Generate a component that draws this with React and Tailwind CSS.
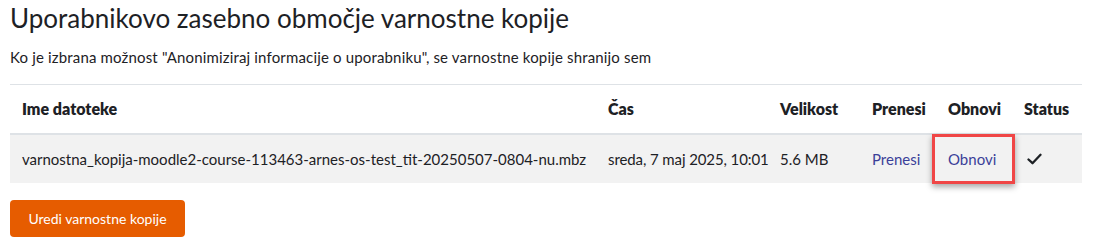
export default function App() {
  return (
    <div className="px-[10px] pt-[3px] font-['Lato','Liberation_Sans',sans-serif] text-[#1d2125] bg-white min-h-screen">
      <h2 className="text-[26px] leading-[31px] font-normal">Uporabnikovo zasebno območje varnostne kopije</h2>
      <p className="mt-[12px] text-[15px] leading-[22px] tracking-[0.16px]">
        Ko je izbrana možnost "Anonimiziraj informacije o uporabniku", se varnostne kopije shranijo sem
      </p>
      <table className="mt-[16px] w-[1072px] table-fixed border-collapse text-[15px] leading-[22px]">
        <thead>
          <tr className="border-t border-[#dee2e6] text-[16px]">
            <th className="w-[586px] px-[12px] py-[13px] text-left font-extrabold border-b-2 border-[#dee2e6]">Ime datoteke</th>
            <th className="w-[172px] px-[12px] py-[13px] text-left font-extrabold border-b-2 border-[#dee2e6]">Čas</th>
            <th className="w-[92px] px-[12px] py-[13px] text-left font-extrabold border-b-2 border-[#dee2e6]">Velikost</th>
            <th className="w-[76px] px-[12px] py-[13px] text-left font-extrabold border-b-2 border-[#dee2e6]">Prenesi</th>
            <th className="w-[76px] px-[12px] py-[13px] text-left font-extrabold border-b-2 border-[#dee2e6]">Obnovi</th>
            <th className="w-[70px] px-[12px] py-[13px] text-left font-extrabold border-b-2 border-[#dee2e6]">Status</th>
          </tr>
        </thead>
        <tbody>
          <tr className="bg-[#f2f2f2]">
            <td className="px-[12px] py-[13px] whitespace-nowrap">varnostna_kopija-moodle2-course-113463-arnes-os-test_tit-20250507-0804-nu.mbz</td>
            <td className="px-[12px] py-[13px] whitespace-nowrap tracking-[-0.1px]">sreda, 7 maj 2025, 10:01</td>
            <td className="px-[12px] py-[13px] whitespace-nowrap">5.6 MB</td>
            <td className="px-[12px] py-[13px]">
              <a className="text-[#3b3f99]">Prenesi</a>
            </td>
            <td className="relative px-[12px] py-[13px]">
              <a className="text-[#3b3f99]">Obnovi</a>
              <span className="absolute left-[-4px] right-[-3px] top-[-1px] bottom-[-1px] border-[3px] border-[#f04646] shadow-[0_3px_6px_rgba(0,0,0,0.35)]"></span>
            </td>
            <td className="px-[12px] py-[13px]">
              <svg width="15" height="12" viewBox="0 0 15 12" className="ml-[3px]">
                <path d="M1.5 6.5 L5.5 10.2 L13.5 1.8" fill="none" stroke="#1d2125" strokeWidth="2.3" strokeLinecap="round" strokeLinejoin="round" />
              </svg>
            </td>
          </tr>
        </tbody>
      </table>
      <button className="mt-[17px] h-[37px] w-[175px] rounded-[4px] bg-[#e65c00] text-white text-[14px] leading-[22px]">
        Uredi varnostne kopije
      </button>
      <h3 className="mt-[8px] text-[26px] leading-[30px] font-normal">Samodejne varnostne kopije</h3>
    </div>
  );
}
